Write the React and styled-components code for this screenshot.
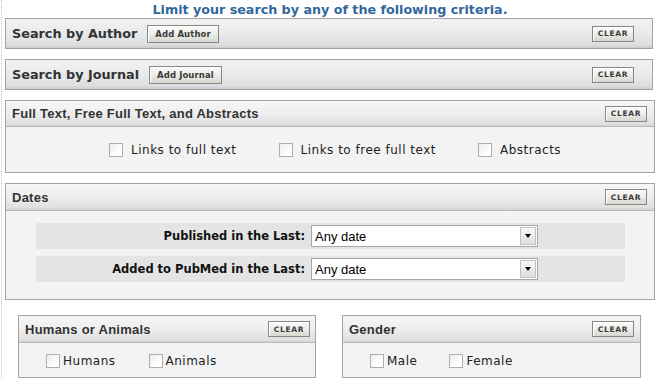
import React from "react";
import styled, { createGlobalStyle } from "styled-components";

const GlobalStyle = createGlobalStyle`
  html, body {
    margin: 0;
    padding: 0;
    background: #fff;
    overflow: hidden;
  }
  body {
    font-family: "DejaVu Sans", Verdana, sans-serif;
  }
`;

const Page = styled.div`
  width: 650px;
  min-height: 378px;
  margin-left: 1px;
  padding-left: 3px;
  border-left: 1px dotted #c4c4c4;
`;

const Title = styled.h1`
  margin: 0;
  padding-top: 2px;
  height: 16px;
  line-height: 16px;
  text-align: center;
  font: bold 12.7px "DejaVu Sans", Verdana, sans-serif;
  color: #31679c;
`;

const Panel = styled.section`
  box-sizing: border-box;
  width: ${(p) => (p.$width ? `${p.$width}px` : "100%")};
  margin-bottom: ${(p) => (p.$gap !== undefined ? p.$gap : 10)}px;
  border: 1px solid #a3a3a3;
  background: #fff;
`;

const SearchBar = styled.div`
  display: flex;
  align-items: center;
  gap: 10px;
  height: 29px;
  padding: 0 18px 0 6px;
  background: linear-gradient(#f2f2f3, #e8e9ea 55%, #dcdddf 90%, #c9cacc);
`;

const SearchTitle = styled.span`
  font: bold 12.8px "DejaVu Sans", Verdana, sans-serif;
  color: #333;
`;

const Header = styled.div`
  display: flex;
  align-items: center;
  height: ${(p) => p.$h || 25}px;
  padding: 0 ${(p) => (p.$padRight !== undefined ? p.$padRight : 7)}px 0 6px;
  border-bottom: 1px solid #b9b9b9;
  background: linear-gradient(#f6f6f6, #eeeeee 50%, #e0e0e0 90%, #d4d4d4);
`;

const HeaderTitle = styled.span`
  font: bold 13px "Liberation Sans", Arial, sans-serif;
  letter-spacing: 0.25px;
  color: #333;
`;

const Spacer = styled.span`
  flex: 1;
`;

const SmallButton = styled.button`
  box-sizing: border-box;
  height: ${(p) => p.$h}px;
  padding: 0 ${(p) => p.$pad}px;
  border: 1px solid #878787;
  box-shadow: inset 1px 1px 0 #fff;
  background: linear-gradient(#fbfbf9, #ecece8 50%, #d8d8d2);
  font: bold ${(p) => p.$size}px "DejaVu Sans", Verdana, sans-serif;
  letter-spacing: ${(p) => p.$ls}px;
  color: #3a3a3a;
  cursor: pointer;
`;

const Body = styled.div`
  background: #f3f3f3;
  padding: ${(p) => p.$pad};
  min-height: ${(p) => p.$minH || 0}px;
  box-sizing: border-box;
`;

const OptionRow = styled.div`
  display: flex;
  align-items: center;
  gap: ${(p) => p.$gap}px;
  padding-left: ${(p) => p.$indent}px;
  height: ${(p) => p.$h}px;
`;

const Option = styled.label`
  display: flex;
  align-items: center;
  gap: ${(p) => p.$gap}px;
  font: 12px "DejaVu Sans", Verdana, sans-serif;
  letter-spacing: 0.5px;
  color: #222;
`;

const Check = styled.span`
  flex: none;
  box-sizing: border-box;
  width: 14px;
  height: 14px;
  border: 1px solid #a9afb5;
  background: linear-gradient(135deg, #ececec, #ffffff 70%);
`;

const DateRows = styled.div`
  display: flex;
  flex-direction: column;
  gap: 7px;
  margin: 0 29px 0 30px;
`;

const DateRow = styled.div`
  display: grid;
  grid-template-columns: 269px 227px;
  column-gap: 6px;
  align-items: center;
  height: 26px;
  background: #e4e4e4;
`;

const DateLabel = styled.span`
  text-align: right;
  font: bold 11.5px "DejaVu Sans", Verdana, sans-serif;
  color: #111;
`;

const Select = styled.div`
  box-sizing: border-box;
  display: flex;
  align-items: center;
  height: 22px;
  padding: 1px;
  border: 1px solid #a6a6a6;
  background: #fff;
`;

const SelectText = styled.span`
  flex: 1;
  padding-left: 2px;
  font: 13px "Liberation Sans", Arial, sans-serif;
  color: #000;
`;

const SelectArrow = styled.span`
  box-sizing: border-box;
  display: flex;
  align-items: center;
  justify-content: center;
  width: 16px;
  height: 18px;
  border: 1px solid #c2c2c2;
  background: linear-gradient(#f7f7f7, #dedede);

  &::after {
    content: "";
    border-left: 3.5px solid transparent;
    border-right: 3.5px solid transparent;
    border-top: 4px solid #000;
  }
`;

const Columns = styled.div`
  display: flex;
  gap: 26px;
  padding: 0 14px 0 13px;
  margin-top: 15px;
`;

const Clear = () => (
  <SmallButton $h={16} $pad={0} $size={7.5} $ls={0.7} style={{ width: 42 }}>
    CLEAR
  </SmallButton>
);

const SearchPanel = ({ title, action }) => (
  <Panel $width={648}>
    <SearchBar>
      <SearchTitle>{title}</SearchTitle>
      <SmallButton $h={18} $pad={7} $size={8.5} $ls={0.1}>
        {action}
      </SmallButton>
      <Spacer />
      <Clear />
    </SearchBar>
  </Panel>
);

const Section = ({ title, padRight, width, gap, headerH, children }) => (
  <Panel $width={width} $gap={gap}>
    <Header $padRight={padRight} $h={headerH}>
      <HeaderTitle>{title}</HeaderTitle>
      <Spacer />
      <Clear />
    </Header>
    {children}
  </Panel>
);

const DateSelect = ({ label }) => (
  <DateRow>
    <DateLabel>{label}</DateLabel>
    <Select>
      <SelectText>Any date</SelectText>
      <SelectArrow />
    </Select>
  </DateRow>
);

export default function App() {
  return (
    <>
      <GlobalStyle />
      <Page>
        <Title>Limit your search by any of the following criteria.</Title>

        <SearchPanel title="Search by Author" action="Add Author" />
        <SearchPanel title="Search by Journal" action="Add Journal" />

        <Section title="Full Text, Free Full Text, and Abstracts">
          <Body $pad="0">
            <OptionRow $gap={42} $indent={103} $h={45}>
              <Option $gap={8}>
                <Check />
                Links to full text
              </Option>
              <Option $gap={8}>
                <Check />
                Links to free full text
              </Option>
              <Option $gap={8}>
                <Check />
                Abstracts
              </Option>
            </OptionRow>
          </Body>
        </Section>

        <Section title="Dates" gap={0} headerH={26}>
          <Body $pad="12px 0 17px">
            <DateRows>
              <DateSelect label="Published in the Last:" />
              <DateSelect label="Added to PubMed in the Last:" />
            </DateRows>
          </Body>
        </Section>

        <Columns>
          <Section
            title="Humans or Animals"
            width={299}
            padRight={5}
            gap={0}
            headerH={26}
          >
            <Body $pad="10px 0 0" $minH={34}>
              <OptionRow $gap={33} $indent={27} $h={15}>
                <Option $gap={3}>
                  <Check />
                  Humans
                </Option>
                <Option $gap={3}>
                  <Check />
                  Animals
                </Option>
              </OptionRow>
            </Body>
          </Section>
          <Section title="Gender" width={300} padRight={6} gap={0} headerH={26}>
            <Body $pad="10px 0 0" $minH={34}>
              <OptionRow $gap={32} $indent={27} $h={15}>
                <Option $gap={3}>
                  <Check />
                  Male
                </Option>
                <Option $gap={3}>
                  <Check />
                  Female
                </Option>
              </OptionRow>
            </Body>
          </Section>
        </Columns>
      </Page>
    </>
  );
}
